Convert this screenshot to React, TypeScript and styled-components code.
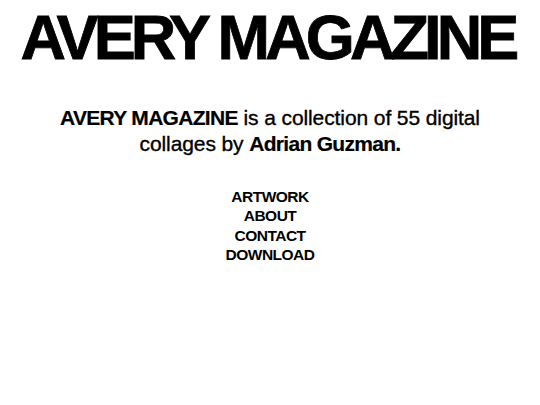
import styled, { createGlobalStyle } from "styled-components";

const GlobalStyle = createGlobalStyle`
  html, body {
    margin: 0;
    padding: 0;
    background: #fff;
  }
  body {
    font-family: "Liberation Sans", Arial, sans-serif;
    color: #000;
  }
`;

const StyledPage = styled.div`
  display: flex;
  flex-direction: column;
  align-items: center;
  padding-top: 2px;
`;

const StyledTitle = styled.h1`
  margin: 0;
  font-size: 63px;
  font-weight: 700;
  letter-spacing: -4.9px;
  line-height: 70px;
  white-space: nowrap;
  padding-right: 5px;
  -webkit-text-stroke: 0.8px #000;
`;

const StyledIntro = styled.p`
  margin: 33px 0 0;
  width: 460px;
  text-align: center;
  font-size: 21px;
  line-height: 26px;
  letter-spacing: -0.1px;
  -webkit-text-stroke: 0.35px #000;

  strong {
    font-weight: 700;
    letter-spacing: -0.7px;
    -webkit-text-stroke: 0.2px #000;
  }
`;

const StyledNav = styled.nav`
  display: flex;
  flex-direction: column;
  align-items: center;
  margin-top: 30px;
`;

const StyledNavLink = styled.a`
  font-size: 15.5px;
  font-weight: 700;
  line-height: 19.4px;
  letter-spacing: -0.5px;
  color: #000;
  text-decoration: none;
`;

const links = ["ARTWORK", "ABOUT", "CONTACT", "DOWNLOAD"];

export default function App() {
  return (
    <>
      <GlobalStyle />
      <StyledPage>
        <StyledTitle>AVERY MAGAZINE</StyledTitle>
        <StyledIntro>
          <strong>AVERY MAGAZINE</strong> is a collection of 55 digital collages by{" "}
          <strong>Adrian Guzman.</strong>
        </StyledIntro>
        <StyledNav>
          {links.map((l) => (
            <StyledNavLink key={l} href="#">
              {l}
            </StyledNavLink>
          ))}
        </StyledNav>
      </StyledPage>
    </>
  );
}
